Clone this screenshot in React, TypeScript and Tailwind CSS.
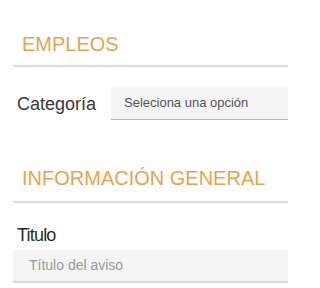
import React from "react";

export default function App() {
  return (
    <div className="w-[288px] h-[288px] overflow-hidden bg-white pl-[13px] pt-[32px] font-['Liberation_Sans',Arial,sans-serif]">
      <h2 className="pl-[9px] pb-[9px] text-[20px] leading-[24px] text-[#eba24e] border-b-2 border-[#dcdcdc] font-normal">
        EMPLEOS
      </h2>
      <div className="mt-[20px] flex items-center">
        <label className="w-[98px] shrink-0 pl-[4px] text-[18px] leading-[22px] text-[#3a3a3a]">
          Categoría
        </label>
        <div className="flex-1 h-[33px] flex items-center bg-[#f4f4f4] border-b border-[#b5b5b5] pl-[13px] text-[13px] text-[#555]">
          Seleciona una opción
        </div>
      </div>
      <h2 className="mt-[46px] pl-[9px] pb-[11px] text-[20px] leading-[24px] text-[#eba24e] border-b-2 border-[#dcdcdc] font-normal">
        INFORMACIÓN GENERAL
      </h2>
      <div className="mt-[22px] pl-[4px] text-[18px] leading-[20px] tracking-[-0.8px] text-[#2a2a2a]">
        Titulo
      </div>
      <div className="mt-[5px] h-[33px] flex items-center bg-[#f4f4f4] border-b-2 border-[#d8d8d8] pl-[16px] text-[14px] text-[#9a9a9a]">
        Título del aviso
      </div>
    </div>
  );
}
